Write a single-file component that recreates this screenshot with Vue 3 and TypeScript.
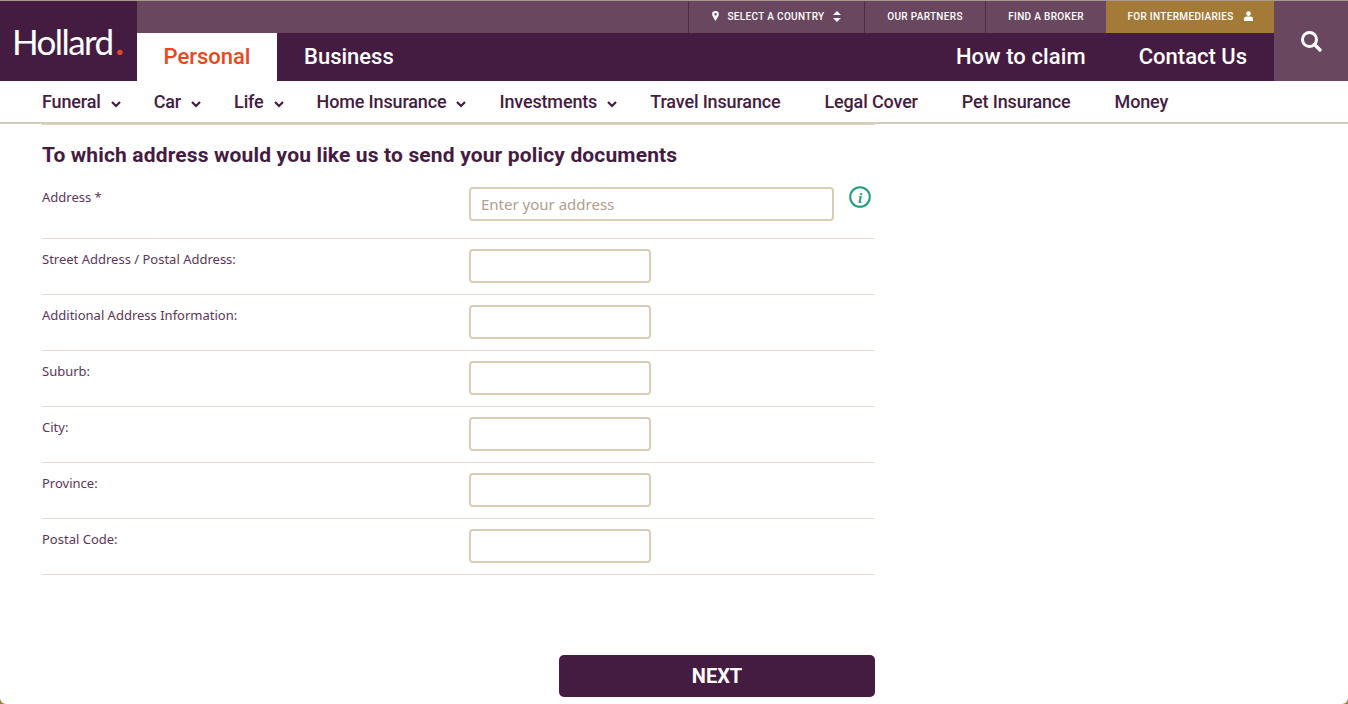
<script setup lang="ts">
const topLinks = ['OUR PARTNERS', 'FIND A BROKER']

const menu = [
  { label: 'Funeral', sub: true },
  { label: 'Car', sub: true },
  { label: 'Life', sub: true },
  { label: 'Home Insurance', sub: true },
  { label: 'Investments', sub: true },
  { label: 'Travel Insurance', sub: false },
  { label: 'Legal Cover', sub: false },
  { label: 'Pet Insurance', sub: false },
  { label: 'Money', sub: false },
]

const fields = [
  'Street Address / Postal Address:',
  'Additional Address Information:',
  'Suburb:',
  'City:',
  'Province:',
  'Postal Code:',
]
</script>

<template>
  <div class="page">
    <header class="header">
      <a class="logo">Hollard<span class="dot">.</span></a>
      <div class="header-mid">
        <div class="top-bar">
          <a class="top-link country">
            <svg class="pin" viewBox="0 0 8 12" width="7" height="10">
              <path d="M4 0a4 4 0 0 0-4 4c0 2.500 4 8 4 8s4-5.500 4-8a4 4 0 0 0-4-4zm0 5.500a1.500 1.500 0 1 1 0-3 1.500 1.500 0 0 1 0 3z" fill="#fff" />
            </svg>
            SELECT A COUNTRY
            <svg class="updown" viewBox="0 0 8 11" width="8" height="11">
              <path d="M4 0l4 4H0zM4 11L0 7h8z" fill="#fff" />
            </svg>
          </a>
          <a v-for="l in topLinks" :key="l" class="top-link">{{ l }}</a>
          <a class="top-link inter">
            FOR INTERMEDIARIES
            <svg class="user" viewBox="0 0 10 11" width="9" height="10">
              <circle cx="5" cy="2.800" r="2.600" fill="#fff" />
              <path d="M0 11V8.500C0 6.800 1.500 6 3 6h4c1.500 0 3 .8 3 2.500V11z" fill="#fff" />
            </svg>
          </a>
        </div>
        <div class="main-bar">
          <a class="tab active">Personal</a>
          <a class="tab">Business</a>
          <div class="spacer"></div>
          <a class="tab claim">How to claim</a>
          <a class="tab">Contact Us</a>
        </div>
      </div>
      <div class="search">
        <svg viewBox="0 0 22 22" width="22" height="22" fill="none" stroke="#fff">
          <circle cx="9.500" cy="9.500" r="7" stroke-width="3" />
          <path d="M14.500 14.500l5.500 5.500" stroke-width="3.400" stroke-linecap="round" />
        </svg>
      </div>
    </header>

    <nav class="menu">
      <a v-for="m in menu" :key="m.label" class="menu-item" :class="{ sub: m.sub }">
        {{ m.label }}
        <svg v-if="m.sub" class="chev" viewBox="0 0 10 7" width="10" height="7" fill="none" stroke="#451c41" stroke-width="2.200">
          <path d="M1 1l4 4 4-4" />
        </svg>
      </a>
    </nav>

    <main class="content">
      <h2 class="title">To which address would you like us to send your policy documents</h2>

      <div class="row first">
        <label class="lbl">Address *</label>
        <input class="inp wide" placeholder="Enter your address" />
        <svg class="info" viewBox="0 0 22 22" width="22" height="22">
          <circle cx="11" cy="11" r="9.800" fill="none" stroke="#1e9e7c" stroke-width="2" />
          <text x="11" y="16.500" text-anchor="middle" class="info-i">i</text>
        </svg>
      </div>

      <div v-for="f in fields" :key="f" class="row">
        <label class="lbl">{{ f }}</label>
        <input class="inp" />
      </div>

      <button class="next">NEXT</button>
    </main>
  </div>
</template>

<style scoped>
.page {
  width: 1348px;
  height: 704px;
  overflow: hidden;
  background: #fff;
  border-radius: 0 0 6px 6px;
  font-family: Roboto, "Liberation Sans", sans-serif;
  color: #451c41;
}

.header {
  display: flex;
  height: 80px;
  border-top: 1px solid #a99a8e;
  box-sizing: content-box;
}

.logo {
  width: 137px;
  background: #451c41;
  color: #fff;
  font-family: Lato, sans-serif;
  font-size: 35px;
  line-height: 80px;
  padding-left: 12px;
  box-sizing: border-box;
  letter-spacing: -1.6px;
  white-space: nowrap;
}
.dot {
  color: #e8481c;
  font-weight: 700;
  margin-left: 3px;
}

.header-mid {
  flex: 1;
  display: flex;
  flex-direction: column;
}

.top-bar {
  height: 32px;
  padding-bottom: 2px;
  box-sizing: border-box;
  background: #69485f;
  display: flex;
  justify-content: flex-end;
}
.top-link {
  display: flex;
  align-items: center;
  justify-content: center;
  width: 121px;
  height: 32px;
  border-left: 1px solid #4f2a49;
  color: #fff;
  font-size: 10px;
  font-weight: 500;
  letter-spacing: 0.33px;
  box-sizing: border-box;
  padding-bottom: 2px;
  white-space: nowrap;
}
.country {
  width: 176px;
  gap: 8px;
}
.inter {
  width: 168px;
  background: #a37a38;
  border-left: none;
  gap: 10px;
}

.main-bar {
  flex: 1;
  background: #451c41;
  display: flex;
}
.spacer {
  flex: 1;
}
.tab {
  padding: 0 27px;
  line-height: 48px;
  color: #fff;
  font-size: 22px;
  font-weight: 500;
}
.tab.active {
  width: 140px;
  padding: 0;
  text-align: center;
  background: #fff;
  color: #e8481c;
}
.tab.claim {
  padding-right: 26px;
  letter-spacing: 0.1px;
}

.search {
  width: 74px;
  background: #69485f;
  display: flex;
  justify-content: center;
  padding-top: 29px;
  box-sizing: border-box;
}

.menu {
  display: flex;
  height: 41px;
  padding-left: 20px;
  align-items: center;
  border-bottom: 2px solid #d4ccbc;
  box-sizing: content-box;
}
.menu-item {
  display: flex;
  align-items: center;
  padding: 0 22px 1px;
  font-size: 18px;
  font-weight: 500;
  letter-spacing: -0.15px;
  white-space: nowrap;
}
.chev {
  margin-left: 10px;
  margin-right: -11px;
  margin-top: 7px;
}

.content {
  width: 833px;
  margin-left: 42px;
  border-top: 1px solid #e3d3b8;
}

.title {
  margin: 18px 0 0;
  font-size: 21px;
  line-height: 24px;
  font-weight: 700;
  letter-spacing: 0.15px;
}

.row {
  display: flex;
  align-items: flex-start;
  height: 56px;
  padding-top: 10px;
  box-sizing: border-box;
  border-bottom: 1px solid #e6dfd0;
}
.row.first {
  height: 65px;
  margin-top: 7px;
  padding-top: 13px;
}
.lbl {
  width: 427px;
  flex-shrink: 0;
  padding-top: 1px;
  font-family: "Noto Sans", sans-serif;
  font-size: 13px;
  line-height: 18px;
  color: #5e3556;
}
.inp {
  width: 182px;
  height: 34px;
  box-sizing: border-box;
  border: 2px solid #dacdb7;
  border-radius: 4px;
  background: #fff;
  padding: 0 10px;
  font-family: "Noto Sans", sans-serif;
  font-size: 15px;
  outline: none;
}
.inp.wide {
  width: 365px;
}
.inp::placeholder {
  color: #b09d90;
  opacity: 1;
}

.info {
  margin-left: 15px;
  margin-top: -1px;
}
.info-i {
  font-family: "Liberation Serif", serif;
  font-style: italic;
  font-weight: 700;
  font-size: 15px;
  fill: #1e9e7c;
}

.next {
  display: block;
  width: 316px;
  height: 42px;
  margin: 80px 0 0 auto;
  border: none;
  border-radius: 5px;
  background: #451c41;
  color: #fff;
  font-family: Roboto, sans-serif;
  font-size: 20px;
  font-weight: 700;
}
</style>

<style>
html, body {
  margin: 0;
  background: #a37a38;
}
</style>
